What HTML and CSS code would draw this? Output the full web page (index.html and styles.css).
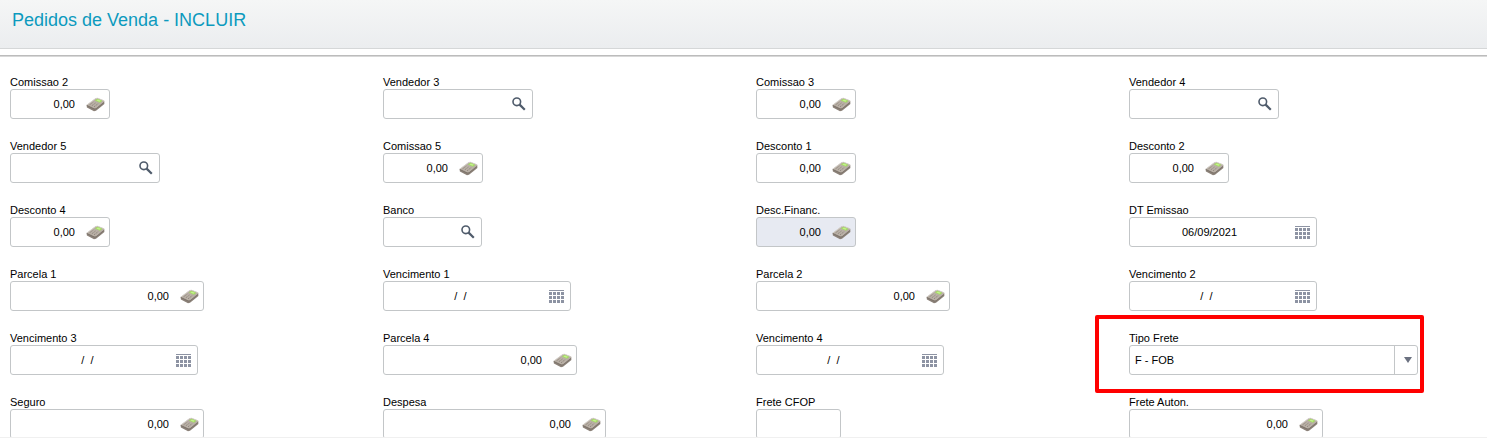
FILE: index.html
```html
<!DOCTYPE html>
<html lang="pt-BR">
<head>
<meta charset="utf-8">
<title>Pedidos de Venda</title>
<meta name="viewport" content="width=device-width, initial-scale=1">
<link rel="stylesheet" href="styles.css">
</head>
<body>
<!-- icons -->
<svg class="sprite" aria-hidden="true">
<symbol id="calc" viewBox="0 0 19 15">
<path d="M.6 8 .9 10.6 8 14.2 10 13.8 18.4 7 18.2 4.4z" fill="#8b8178"/>
<path d="M.6 8 9.6 1.2 11.6 .9 18.2 3.6 18.3 4.8 10 11.4 8.2 11.6z" fill="#b9b0a6"/>
<path d="M1 7.9 9.7 1.5 11.5 1.2 17.8 3.7" fill="none" stroke="#d8d4ce" stroke-width=".8"/>
<path d="M8.8 3.6 11.4 1.8 16.4 3.8 14 5.8z" fill="#a4dc62"/>
<path d="M10.4 3.6 12 2.6 14.8 3.8 13.4 4.8z" fill="#c4f08e"/>
<path d="M3.6 7.8 7.4 5M5.8 8.8 9.8 5.8M8 9.8 12.2 6.6" stroke="#8c8279" stroke-width=".9" stroke-dasharray="1.4 .8"/>
<path d="M.8 8.4 8.2 12 10 11.8 18.2 5.2" fill="none" stroke="#716860" stroke-width=".6"/>
</symbol>
<symbol id="lupa" viewBox="0 0 14 14">
<circle cx="4.8" cy="4.8" r="3.8" fill="none" stroke="#4f5b6b" stroke-width="1.6"/>
<path d="M7.6 7.6 12.8 12.8" stroke="#4f5b6b" stroke-width="2.2"/>
</symbol>
<symbol id="cal" viewBox="0 0 15 13">
<path d="M0 .5h15" stroke="#8d93a3" stroke-width="1"/>
<path d="M0 3.5h15M0 7.5h15M0 11.5h15" stroke="#8d93a3" stroke-width="3" stroke-dasharray="3 1"/>
</symbol>
</svg>

<header class="topo">
<h1>Pedidos de Venda - INCLUIR</h1>
</header>

<form class="pedido">
<div class="campo">
<label for="comis2">Comissao 2</label>
<div class="caixa valor"><input id="comis2" type="text" value="0,00"><button type="button" aria-label="Calculadora"><svg class="calc"><use href="#calc"/></svg></button></div>
</div>
<div class="campo">
<label for="vend3">Vendedor 3</label>
<div class="caixa busca"><input id="vend3" type="text"><button type="button" aria-label="Pesquisar"><svg class="lupa"><use href="#lupa"/></svg></button></div>
</div>
<div class="campo">
<label for="comis3">Comissao 3</label>
<div class="caixa valor"><input id="comis3" type="text" value="0,00"><button type="button" aria-label="Calculadora"><svg class="calc"><use href="#calc"/></svg></button></div>
</div>
<div class="campo">
<label for="vend4">Vendedor 4</label>
<div class="caixa busca"><input id="vend4" type="text"><button type="button" aria-label="Pesquisar"><svg class="lupa"><use href="#lupa"/></svg></button></div>
</div>

<div class="campo">
<label for="vend5">Vendedor 5</label>
<div class="caixa busca"><input id="vend5" type="text"><button type="button" aria-label="Pesquisar"><svg class="lupa"><use href="#lupa"/></svg></button></div>
</div>
<div class="campo">
<label for="comis5">Comissao 5</label>
<div class="caixa valor"><input id="comis5" type="text" value="0,00"><button type="button" aria-label="Calculadora"><svg class="calc"><use href="#calc"/></svg></button></div>
</div>
<div class="campo">
<label for="desc1">Desconto 1</label>
<div class="caixa valor"><input id="desc1" type="text" value="0,00"><button type="button" aria-label="Calculadora"><svg class="calc"><use href="#calc"/></svg></button></div>
</div>
<div class="campo">
<label for="desc2">Desconto 2</label>
<div class="caixa valor"><input id="desc2" type="text" value="0,00"><button type="button" aria-label="Calculadora"><svg class="calc"><use href="#calc"/></svg></button></div>
</div>

<div class="campo">
<label for="desc4">Desconto 4</label>
<div class="caixa valor"><input id="desc4" type="text" value="0,00"><button type="button" aria-label="Calculadora"><svg class="calc"><use href="#calc"/></svg></button></div>
</div>
<div class="campo">
<label for="banco">Banco</label>
<div class="caixa busca curta"><input id="banco" type="text"><button type="button" aria-label="Pesquisar"><svg class="lupa"><use href="#lupa"/></svg></button></div>
</div>
<div class="campo">
<label for="descfin">Desc.Financ.</label>
<div class="caixa valor travada"><input id="descfin" type="text" value="0,00" readonly><button type="button" aria-label="Calculadora"><svg class="calc"><use href="#calc"/></svg></button></div>
</div>
<div class="campo">
<label for="emissao">DT Emissao</label>
<div class="caixa data"><input id="emissao" type="text" value="06/09/2021"><button type="button" aria-label="Calendario"><svg class="cal"><use href="#cal"/></svg></button></div>
</div>

<div class="campo">
<label for="parc1">Parcela 1</label>
<div class="caixa valor longa"><input id="parc1" type="text" value="0,00"><button type="button" aria-label="Calculadora"><svg class="calc"><use href="#calc"/></svg></button></div>
</div>
<div class="campo">
<label for="venc1">Vencimento 1</label>
<div class="caixa data"><input id="venc1" type="text" value="/  /  "><button type="button" aria-label="Calendario"><svg class="cal"><use href="#cal"/></svg></button></div>
</div>
<div class="campo">
<label for="parc2">Parcela 2</label>
<div class="caixa valor longa"><input id="parc2" type="text" value="0,00"><button type="button" aria-label="Calculadora"><svg class="calc"><use href="#calc"/></svg></button></div>
</div>
<div class="campo">
<label for="venc2">Vencimento 2</label>
<div class="caixa data"><input id="venc2" type="text" value="/  /  "><button type="button" aria-label="Calendario"><svg class="cal"><use href="#cal"/></svg></button></div>
</div>

<div class="campo">
<label for="venc3">Vencimento 3</label>
<div class="caixa data"><input id="venc3" type="text" value="/  /  "><button type="button" aria-label="Calendario"><svg class="cal"><use href="#cal"/></svg></button></div>
</div>
<div class="campo">
<label for="parc4">Parcela 4</label>
<div class="caixa valor longa"><input id="parc4" type="text" value="0,00"><button type="button" aria-label="Calculadora"><svg class="calc"><use href="#calc"/></svg></button></div>
</div>
<div class="campo">
<label for="venc4">Vencimento 4</label>
<div class="caixa data"><input id="venc4" type="text" value="/  /  "><button type="button" aria-label="Calendario"><svg class="cal"><use href="#cal"/></svg></button></div>
</div>
<div class="campo destaque">
<label for="frete">Tipo Frete</label>
<div class="caixa lista">
<select id="frete">
	<option>C - CIF</option>
	<option selected="selected">F - FOB</option>
	<option>T - Terceiros</option>
	<option>S - Sem frete</option>
</select>
</div>
</div>

<div class="campo">
<label for="seguro">Seguro</label>
<div class="caixa valor longa"><input id="seguro" type="text" value="0,00"><button type="button" aria-label="Calculadora"><svg class="calc"><use href="#calc"/></svg></button></div>
</div>
<div class="campo">
<label for="despesa">Despesa</label>
<div class="caixa valor extra"><input id="despesa" type="text" value="0,00"><button type="button" aria-label="Calculadora"><svg class="calc"><use href="#calc"/></svg></button></div>
</div>
<div class="campo">
<label for="cfop">Frete CFOP</label>
<div class="caixa codigo"><input id="cfop" type="text"></div>
</div>
<div class="campo">
<label for="auton">Frete Auton.</label>
<div class="caixa valor longa"><input id="auton" type="text" value="0,00"><button type="button" aria-label="Calculadora"><svg class="calc"><use href="#calc"/></svg></button></div>
</div>
</form>
</body>
</html>
```
FILE: styles.css
```css
* {
    box-sizing: border-box;
}
body {
    margin: 0;
    height: 100vh;
    display: flex;
    flex-direction: column;
    overflow: hidden;
    background-color: white;
    color: black;
    font-family: "Liberation Sans", Arial, sans-serif;
    font-size: 11px;
}
.sprite {
    display: none;
}
.topo {
    flex: none;
    height: 49px;
    padding: 9px 12px;
    background: linear-gradient(#f5f6f6, #ebedef);
    border-bottom: 1px solid #d5d7d8;
}
h1 {
    margin: 0;
    font-size: 18px;
    line-height: 22px;
    font-weight: normal;
    color: #0c9abe;
}
.pedido {
    flex: 1;
    min-height: 0;
    overflow: hidden;
    display: grid;
    grid-template-columns: repeat(4, 1fr);
    align-content: start;
    gap: 21px 15px;
    margin-top: 6px;
    padding: 20px 0 0 10px;
    border-top: 1px solid #bcbcbc;
    border-bottom: 1px solid #f0f0f0;
    box-shadow: inset 0 1px #d8d8d8;
}
.campo label {
    display: block;
    width: max-content;
    line-height: 13px;
}
.caixa {
    display: flex;
    align-items: center;
    height: 30px;
    border: 1px solid #c3c6c8;
    border-radius: 3px;
    background-color: white;
}
.caixa input, .caixa select {
    flex: 1;
    min-width: 0;
    height: 28px;
    padding: 0 5px;
    border: none;
    outline: none;
    background: transparent;
    font: inherit;
    color: black;
}
.caixa button {
    flex: none;
    padding: 0;
    border: none;
    background: transparent;
    cursor: pointer;
}
.caixa svg {
    display: block;
}
.valor {
    width: 100px;
}
.valor input {
    text-align: right;
    padding-right: 11px;
}
.valor button {
    margin-right: 4px;
}
.busca {
    width: 150px;
}
.busca button, .data button {
    margin-right: 6px;
}
.data {
    width: 188px;
}
.data input {
    text-align: center;
    padding-right: 11px;
}
.curta {
    width: 99px;
}
.longa {
    width: 194px;
}
.extra {
    width: 223px;
}
.codigo {
    width: 85px;
}
.travada {
    background-color: #e7eaf2;
}
.calc {
    width: 19px;
    height: 15px;
}
.lupa {
    width: 14px;
    height: 14px;
}
.cal {
    width: 15px;
    height: 13px;
}
.lista {
    position: relative;
    width: 289px;
}
.lista select {
    appearance: none;
    margin-right: 22px;
    border-right: 1px solid #c3c6c8;
}
/* drop-down arrow */
.lista::after {
    content: "";
    position: absolute;
    right: 5px;
    top: 11px;
    border: 4px solid transparent;
    border-top: 6px solid #6b7180;
    border-bottom: none;
    pointer-events: none;
}
/* red frame over the field */
.destaque {
    position: relative;
    width: 289px;
}
.destaque::after {
    content: "";
    position: absolute;
    top: -17px;
    right: -6px;
    bottom: -18px;
    left: -34px;
    border: 4px solid #ff0000;
    border-radius: 2px;
    pointer-events: none;
}
```
